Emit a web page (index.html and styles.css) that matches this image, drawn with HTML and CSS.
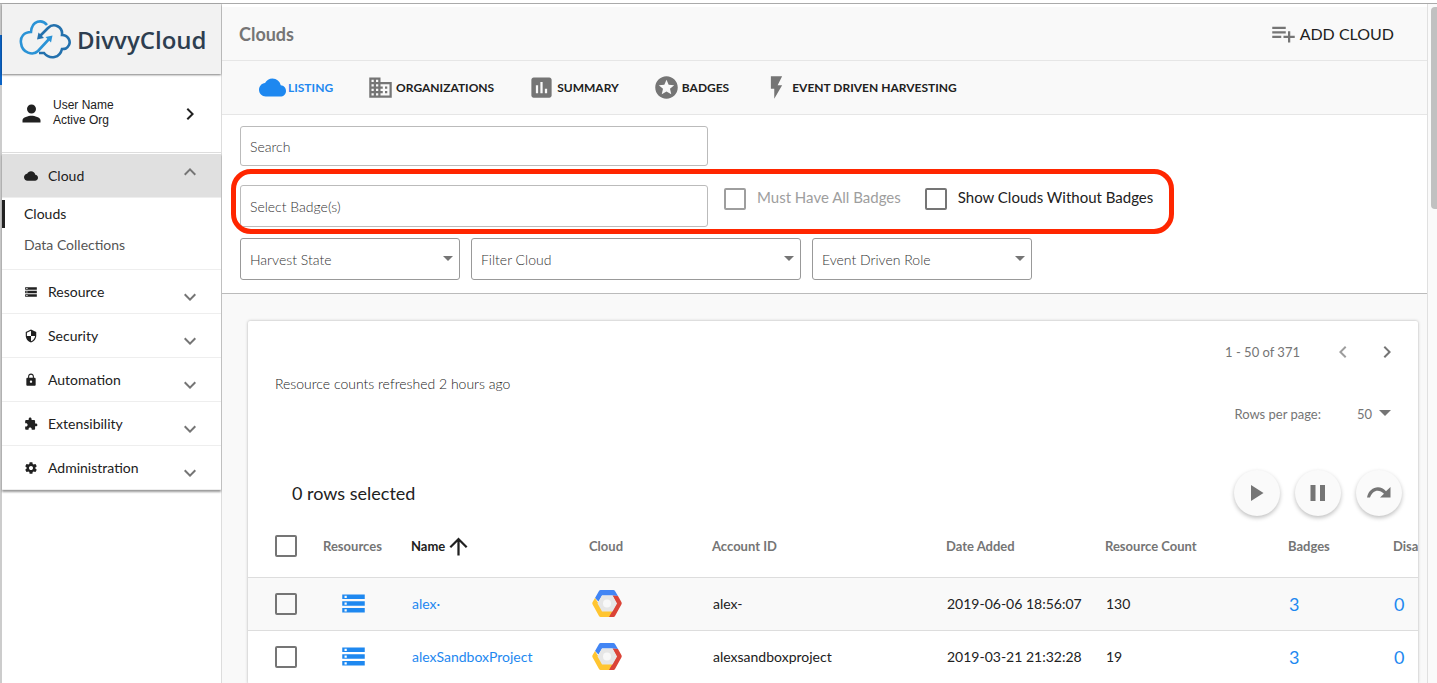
FILE: index.html
```
<!DOCTYPE html>
<html lang="en">
<head>
  <meta charset="utf-8">
  <title>Clouds</title>
  <link rel="stylesheet" href="styles.css">
</head>
<body>
  <!-- shared icons -->
  <svg class="sprite" aria-hidden="true">
    <symbol id="cloud" viewBox="0 0 24 24"><path d="M19.35 10.04C18.67 6.59 15.64 4 12 4 9.11 4 6.6 5.64 5.35 8.04 2.34 8.36 0 10.91 0 14c0 3.31 2.69 6 6 6h13c2.76 0 5-2.24 5-5 0-2.64-2.05-4.78-4.65-4.96z"/></symbol>
    <symbol id="storage" viewBox="0 0 24 24"><path d="M2 20h20v-4H2v4zm2-3h2v2H4v-2zM2 4v4h20V4H2zm4 3H4V5h2v2zm-4 7h20v-4H2v4zm2-3h2v2H4v-2z"/></symbol>
    <symbol id="down" viewBox="0 0 24 24"><path d="M16.59 8.59L12 13.17 7.41 8.59 6 10l6 6 6-6z"/></symbol>
    <symbol id="up" viewBox="0 0 24 24"><path d="M12 8l-6 6 1.41 1.41L12 10.83l4.59 4.58L18 14z"/></symbol>
    <symbol id="right" viewBox="0 0 24 24"><path d="M10 6L8.59 7.41 13.17 12l-4.58 4.59L10 18l6-6z"/></symbol>
    <symbol id="left" viewBox="0 0 24 24"><path d="M15.41 7.41L14 6l-6 6 6 6 1.41-1.41L10.83 12z"/></symbol>
    <symbol id="gcp" viewBox="0 0 30 27">
      <path fill="#4285f4" d="M7 1Q7.500 0 8.700 0H21.300Q22.500 0 23 1L26 6 20.500 5.500H10L6.500 11.500 3 8z"/>
      <path fill="#db4437" d="M26 6l3.500 6.300q.5 1 0 2L23 26q-.5 1-1.500 1H16l4.500-6.500 4-7L20.500 5.500z"/>
      <path fill="#ffc531" d="M3 8l3.500 5.500 4 7.500h9.800L17 27H8.700Q7.500 27 7 26L.5 14.300q-.5-1 0-2z"/>
      <path fill="#e6e6e6" d="M10 5.500h10.500l4.500 8-4.500 8H10l-4.500-8z"/>
      <circle cx="15" cy="13.500" r="4" fill="#f8f8f8"/>
    </symbol>
  </svg>

  <div class="app">
    <div class="edge"></div>
    <aside class="sidebar">
      <a class="logo" href="#">
        <svg width="52" height="40" viewBox="19 19 52 40">
          <g fill="none" stroke-width="2.600">
            <path stroke="#2b93d6" d="M47 25C42 19 32 20 31 32C24 32 20 37 21 43C22 53 33 56 38 51L50 38"/>
            <path stroke="#2471ad" d="M40 36L48 28C54 22 63 27 62 35C68 35 71 41 69 45C67 49 65 49 62 49C60 58 50 60 44 53H39"/>
          </g>
          <path fill="#2471ad" d="M37 39.500l1.500-7 5.500 5.500z"/>
          <path fill="#2b93d6" d="M52.500 35.500l-7 1.500 5.500 5.500z"/>
        </svg>
        <span>DivvyCloud</span>
      </a>
      <a class="user" href="#">
        <svg class="icon-lg" viewBox="0 0 24 24"><path d="M12 12c2.210 0 4-1.790 4-4s-1.790-4-4-4-4 1.790-4 4 1.790 4 4 4zm0 2c-2.670 0-8 1.340-8 4v2h16v-2c0-2.660-5.330-4-8-4z"/></svg>
        <span class="user-text">User Name<br>Active Org</span>
        <svg class="icon"><use href="#right"/></svg>
      </a>
      <nav>
        <a class="nav-item open" href="#">
          <svg class="icon-sm"><use href="#cloud"/></svg>
          <span>Cloud</span>
          <svg class="icon arrow"><use href="#up"/></svg>
        </a>
        <div class="sub-nav">
          <a class="active" href="#">Clouds</a>
          <a href="#">Data Collections</a>
        </div>
        <a class="nav-item" href="#">
          <svg class="icon-sm"><use href="#storage"/></svg>
          <span>Resource</span>
          <svg class="icon arrow"><use href="#down"/></svg>
        </a>
        <a class="nav-item" href="#">
          <svg class="icon-sm" viewBox="0 0 24 24"><path d="M12 1L3 5v6c0 5.550 3.840 10.740 9 12 5.160-1.260 9-6.450 9-12V5l-9-4zm0 10.990h7c-.53 4.120-3.280 7.790-7 8.940V12H5V6.300l7-3.110v8.800z"/></svg>
          <span>Security</span>
          <svg class="icon arrow"><use href="#down"/></svg>
        </a>
        <a class="nav-item" href="#">
          <svg class="icon-sm" viewBox="0 0 24 24"><path d="M18 8h-1V6c0-2.760-2.240-5-5-5S7 3.240 7 6v2H6c-1.100 0-2 .9-2 2v10c0 1.100.9 2 2 2h12c1.100 0 2-.9 2-2V10c0-1.100-.9-2-2-2zm-6 9c-1.100 0-2-.9-2-2s.9-2 2-2 2 .9 2 2-.9 2-2 2zm3.100-9H8.900V6c0-1.710 1.390-3.100 3.100-3.100 1.710 0 3.100 1.390 3.100 3.100v2z"/></svg>
          <span>Automation</span>
          <svg class="icon arrow"><use href="#down"/></svg>
        </a>
        <a class="nav-item" href="#">
          <svg class="icon-sm" viewBox="0 0 24 24"><path d="M20.500 11H19V7c0-1.100-.9-2-2-2h-4V3.500C13 2.120 11.880 1 10.500 1S8 2.120 8 3.500V5H4c-1.100 0-1.990.9-1.990 2v3.800H3.500c1.490 0 2.700 1.210 2.700 2.700s-1.210 2.700-2.700 2.700H2V20c0 1.100.9 2 2 2h3.800v-1.500c0-1.490 1.210-2.700 2.700-2.700 1.490 0 2.700 1.210 2.700 2.700V22H17c1.100 0 2-.9 2-2v-4h1.500c1.380 0 2.500-1.120 2.500-2.500S21.880 11 20.500 11z"/></svg>
          <span>Extensibility</span>
          <svg class="icon arrow"><use href="#down"/></svg>
        </a>
        <a class="nav-item" href="#">
          <svg class="icon-sm" viewBox="0 0 24 24"><path d="M19.430 12.980c.04-.32.07-.64.07-.98s-.03-.66-.07-.98l2.110-1.650c.19-.15.24-.42.12-.64l-2-3.460c-.12-.22-.39-.3-.61-.22l-2.490 1c-.52-.4-1.080-.73-1.690-.98l-.38-2.650C14.460 2.180 14.250 2 14 2h-4c-.25 0-.46.18-.49.42l-.38 2.650c-.61.25-1.170.59-1.690.98l-2.490-1c-.23-.09-.49 0-.61.22l-2 3.460c-.13.22-.07.49.12.64l2.110 1.650c-.04.32-.07.65-.07.98s.03.66.07.98l-2.110 1.650c-.19.15-.24.42-.12.64l2 3.460c.12.22.39.3.61.22l2.490-1c.52.4 1.080.73 1.690.98l.38 2.650c.03.24.24.42.49.42h4c.25 0 .46-.18.49-.42l.38-2.650c.61-.25 1.170-.59 1.690-.98l2.490 1c.23.09.49 0 .61-.22l2-3.460c.12-.22.07-.49-.12-.64l-2.110-1.650zM12 15.500c-1.930 0-3.500-1.570-3.500-3.500s1.570-3.500 3.500-3.500 3.500 1.570 3.500 3.500-1.570 3.500-3.500 3.500z"/></svg>
          <span>Administration</span>
          <svg class="icon arrow"><use href="#down"/></svg>
        </a>
      </nav>
    </aside>

    <main>
      <header class="title-bar">
        <h1>Clouds</h1>
        <button class="add-cloud" type="button">
          <svg class="icon-lg" viewBox="0 0 24 24"><path d="M14 10H2v2h12v-2zm0-4H2v2h12V6zm4 8v-4h-2v4h-4v2h4v4h2v-4h4v-2h-4zM2 16h8v-2H2v2z"/></svg>
          ADD CLOUD
        </button>
      </header>

      <nav class="tabs">
        <a class="active" href="#"><svg class="icon-lg"><use href="#cloud"/></svg>LISTING</a>
        <a href="#"><svg class="icon-lg" viewBox="0 0 24 24"><path d="M12 7V3H2v18h20V7H12zM6 19H4v-2h2v2zm0-4H4v-2h2v2zm0-4H4V9h2v2zm0-4H4V5h2v2zm4 12H8v-2h2v2zm0-4H8v-2h2v2zm0-4H8V9h2v2zm0-4H8V5h2v2zm10 12h-8v-2h2v-2h-2v-2h2v-2h-2V9h8v10zm-2-8h-2v2h2v-2zm0 4h-2v2h2v-2z"/></svg>ORGANIZATIONS</a>
        <a href="#"><svg class="icon-lg" viewBox="0 0 24 24"><path d="M19 3H5c-1.100 0-2 .9-2 2v14c0 1.100.9 2 2 2h14c1.100 0 2-.9 2-2V5c0-1.100-.9-2-2-2zM9 17H7v-7h2v7zm4 0h-2V7h2v10zm4 0h-2v-4h2v4z"/></svg>SUMMARY</a>
        <a href="#"><svg class="icon-lg" viewBox="0 0 24 24"><path d="M11.990 2C6.470 2 2 6.480 2 12s4.470 10 9.990 10C17.520 22 22 17.520 22 12S17.520 2 11.990 2zm4.240 16L12 15.450 7.770 18l1.120-4.810-3.730-3.230 4.920-.42L12 5l1.920 4.530 4.920.42-3.730 3.230L16.230 18z"/></svg>BADGES</a>
        <a href="#"><svg class="icon-lg" viewBox="0 0 24 24"><path d="M7 2v11h3v9l7-12h-4l4-8z"/></svg>EVENT DRIVEN HARVESTING</a>
      </nav>

      <form class="filters">
        <input class="text-box search" type="text" placeholder="Search" aria-label="Search">
        <div class="badge-row">
          <input class="text-box" type="text" placeholder="Select Badge(s)" aria-label="Select Badge(s)">
          <label class="check disabled"><input type="checkbox" disabled>Must Have All Badges</label>
          <label class="check"><input type="checkbox">Show Clouds Without Badges</label>
        </div>
        <div class="select-row">
          <div class="select">
            <select aria-label="Harvest State"><option>Harvest State</option></select>
          </div>
          <div class="select wide">
            <select aria-label="Filter Cloud"><option>Filter Cloud</option></select>
          </div>
          <div class="select">
            <select aria-label="Event Driven Role"><option>Event Driven Role</option></select>
          </div>
        </div>
      </form>

      <section class="card">
        <div class="card-head">
          <p>Resource counts refreshed 2 hours ago</p>
          <div class="paging">
            <div class="pager">
              <span>1 - 50 of 371</span>
              <button type="button" aria-label="Previous page" disabled><svg class="icon"><use href="#left"/></svg></button>
              <button type="button" aria-label="Next page"><svg class="icon"><use href="#right"/></svg></button>
            </div>
            <div class="per-page">
              <label for="rows">Rows per page:</label>
              <div class="select plain">
                <select id="rows"><option>50</option></select>
              </div>
            </div>
          </div>
        </div>
        <div class="toolbar">
          <span>0 rows selected</span>
          <button type="button" aria-label="Start"><svg viewBox="0 0 24 24"><path d="M6 4v16l12.500-8z"/></svg></button>
          <button type="button" aria-label="Pause"><svg viewBox="0 0 24 24"><path d="M4.500 4h5v16h-5zM14 4h5v16h-5z"/></svg></button>
          <button type="button" aria-label="Retry"><svg viewBox="0 0 24 24"><path d="M23.500 6v10.500H13l4-3.700C12 7.500 5.500 9 3 16.500H0C2 6 13 3 19 10.200z"/></svg></button>
        </div>
        <table>
          <colgroup>
            <col class="c-check"><col class="c-resources"><col class="c-name"><col class="c-cloud"><col class="c-account"><col class="c-date"><col class="c-count"><col class="c-badges"><col>
          </colgroup>
          <thead>
            <tr>
              <th><input type="checkbox" aria-label="Select all"></th>
              <th>Resources</th>
              <th class="sorted"><span>Name<svg class="icon-lg" viewBox="0 0 24 24"><path d="M4 12l1.410 1.410L11 7.830V20h2V7.830l5.580 5.590L20 12l-8-8-8 8z"/></svg></span></th>
              <th>Cloud</th>
              <th>Account ID</th>
              <th>Date Added</th>
              <th>Resource Count</th>
              <th>Badges</th>
              <th>Disa</th>
            </tr>
          </thead>
          <tbody>
            <tr>
              <td><input type="checkbox" aria-label="Select alex-"></td>
              <td class="center"><a href="#" aria-label="Resources"><svg class="icon-lg"><use href="#storage"/></svg></a></td>
              <td><a href="#">alex·</a></td>
              <td><svg class="gcp"><use href="#gcp"/></svg></td>
              <td>alex-</td>
              <td>2019-06-06 18:56:07</td>
              <td>130</td>
              <td class="num"><a href="#">3</a></td>
              <td class="num"><a href="#">0</a></td>
            </tr>
            <tr>
              <td><input type="checkbox" aria-label="Select alexSandboxProject"></td>
              <td class="center"><a href="#" aria-label="Resources"><svg class="icon-lg"><use href="#storage"/></svg></a></td>
              <td><a href="#">alexSandboxProject</a></td>
              <td><svg class="gcp"><use href="#gcp"/></svg></td>
              <td>alexsandboxproject</td>
              <td>2019-03-21 21:32:28</td>
              <td>19</td>
              <td class="num"><a href="#">3</a></td>
              <td class="num"><a href="#">0</a></td>
            </tr>
          </tbody>
        </table>
      </section>
    </main>
    <div class="scrollbar"><div class="thumb"></div></div>
  </div>
</body>
</html>
```
FILE: styles.css
```
*,
*::before {
  box-sizing: border-box;
}

body {
  margin: 0;
  padding-top: 3px;
  height: 100vh;
  overflow: hidden;
  background-color: #fff;
  color: #212121;
  font-family: Lato, sans-serif;
  font-size: 14px;
}

a {
  color: inherit;
  text-decoration: none;
}

button {
  border: none;
  padding: 0;
  background: none;
  color: inherit;
  font-family: inherit;
  cursor: pointer;
}

svg {
  display: block;
  flex-shrink: 0;
  fill: currentColor;
}

.sprite {
  display: none;
}

.icon-sm {
  width: 14px;
  height: 14px;
}

.icon {
  width: 24px;
  height: 24px;
}

.icon-lg {
  width: 27px;
  height: 27px;
}

input[type="checkbox"] {
  appearance: none;
  display: block;
  flex-shrink: 0;
  width: 22px;
  height: 22px;
  margin: 0;
  border: 2px solid #757575;
  border-radius: 2px;
}

.app {
  display: flex;
  height: 100%;
  border-top: 1px solid #aaa;
}

.edge {
  width: 2px;
  background: linear-gradient(#ccc 31px, #0b63c5 31px, #0b63c5 81px, #ccc 81px);
}

/* sidebar */

.sidebar {
  width: 220px;
  flex-shrink: 0;
  border-right: 1px solid #ddd;
}

.logo {
  display: flex;
  align-items: center;
  gap: 6px;
  height: 70px;
  padding-left: 17px;
  background-color: #f2f2f2;
  box-shadow: 0 1px 2px rgba(0, 0, 0, 0.5);
  color: #2d3e50;
  font-family: "Open Sans", sans-serif;
  font-size: 24px;
  font-weight: 600;
}

.user {
  display: flex;
  align-items: center;
  gap: 8px;
  height: 79px;
  padding: 1px 19px 0 16px;
  border-bottom: 1px solid #ddd;
  font-family: "Liberation Sans", sans-serif;
  font-size: 12px;
  line-height: 15px;
}

.user-text {
  flex: 1;
  padding-bottom: 2px;
}

.sidebar nav {
  padding-top: 1px;
  box-shadow: 0 2px 2px rgba(0, 0, 0, 0.4);
}

.nav-item {
  display: flex;
  align-items: center;
  gap: 10px;
  height: 44px;
  padding: 0 19px 0 22px;
  border-bottom: 1px solid #eee;
}

.nav-item span {
  flex: 1;
}

.nav-item .arrow {
  align-self: flex-end;
  margin-bottom: 4px;
  color: #757575;
}

.nav-item.open {
  background-color: #e0e0e0;
}

.nav-item.open .arrow {
  margin-bottom: 13px;
}

.sub-nav {
  padding: 2px 0 7px;
  border-bottom: 1px solid #eee;
}

.sub-nav a {
  display: block;
  margin-bottom: 3px;
  padding-left: 19px;
  border-left: 3px solid transparent;
  color: #555;
  line-height: 28px;
}

.sub-nav .active {
  border-color: #212121;
  color: #212121;
}

/* page header */

main {
  flex: 1;
  min-width: 0;
  overflow: hidden;
  border-right: 1px solid #e0e0e0;
  background-color: #f9f9f9;
}

.title-bar {
  display: flex;
  justify-content: space-between;
  align-items: center;
  height: 57px;
  padding: 0 33px 0 17px;
  border-top: 3px solid #fff;
  border-bottom: 1px solid #e6e6e6;
}

.title-bar h1 {
  margin: 0;
  color: #757575;
  font-size: 18px;
}

.add-cloud {
  display: flex;
  align-items: center;
  gap: 3px;
  font-size: 16px;
}

.add-cloud svg,
.tabs svg {
  color: #757575;
}

.tabs {
  display: flex;
  align-items: center;
  gap: 34px;
  height: 54px;
  padding-left: 37px;
  border-bottom: 1px solid #e6e6e6;
  font-size: 12px;
  font-weight: 700;
}

.tabs a {
  display: flex;
  align-items: center;
  gap: 2px;
}

.tabs .active,
.tabs .active svg {
  color: #1e88f0;
}

/* filters */

.filters {
  padding: 11px 18px 13px;
  border-bottom: 1px solid #bbb;
  background-color: #fff;
}

.text-box {
  display: block;
  width: 468px;
  height: 42px;
  padding: 0 9px;
  border: 1px solid #bbb;
  border-radius: 3px;
  font-family: inherit;
  font-size: 14px;
  font-weight: 300;
}

.text-box::placeholder {
  color: #333;
}

.search {
  height: 40px;
}

.badge-row {
  position: relative;
  display: flex;
  gap: 16px;
  margin: 19px 0 11px;
}

/* highlight ring around the badge filters */
.badge-row::before {
  content: "";
  position: absolute;
  top: -16px;
  left: -9px;
  width: 943px;
  height: 65px;
  border: 5px solid #ff2600;
  border-radius: 20px;
  pointer-events: none;
}

.check {
  display: flex;
  gap: 11px;
  padding-top: 3px;
  margin-right: 8px;
  font-size: 15px;
  line-height: 18px;
}

.check.disabled {
  color: #9e9e9e;
}

.check.disabled input {
  border-color: #9e9e9e;
}

.select-row {
  display: flex;
  gap: 11px;
}

.select {
  position: relative;
  width: 220px;
}

.select.wide {
  width: 330px;
}

.select select {
  appearance: none;
  display: block;
  width: 100%;
  height: 42px;
  padding: 0 9px;
  border: 1px solid #999;
  border-radius: 3px;
  background-color: #fff;
  color: #333;
  font-family: inherit;
  font-size: 14px;
  font-weight: 300;
}

.select::after {
  content: "";
  position: absolute;
  top: 18px;
  right: 7px;
  border: 5px solid transparent;
  border-top-color: #757575;
  border-bottom: none;
  pointer-events: none;
}

/* cloud listing */

.card {
  margin: 27px 9px 0 26px;
  overflow: hidden;
  border-radius: 2px;
  background-color: #fff;
  box-shadow: 0 0 3px rgba(0, 0, 0, 0.3);
}

.card-head {
  display: flex;
  justify-content: space-between;
  align-items: center;
  padding: 0 19px 0 27px;
}

.card-head p {
  margin: 0;
  color: #212121;
  font-weight: 300;
}

.paging {
  color: #757575;
  font-size: 13px;
}

.pager,
.per-page {
  display: flex;
  justify-content: flex-end;
  align-items: center;
  height: 62px;
}

.pager button {
  margin-left: 20px;
}

.pager span {
  margin-right: 11px;
}

.pager button:disabled {
  opacity: 0.7;
}

.per-page {
  gap: 36px;
  padding-right: 8px;
}

.select.plain {
  width: 34px;
}

.select.plain select {
  height: 20px;
  padding: 0;
  border: none;
  color: #757575;
  font-size: 13px;
  font-weight: 400;
}

.select.plain::after {
  top: 6px;
  right: 0;
  border-width: 6px;
  border-bottom: none;
}

.toolbar {
  display: flex;
  align-items: center;
  gap: 15px;
  padding: 25px 16px 0 44px;
  font-size: 18px;
}

.toolbar span {
  flex: 1;
}

.toolbar button {
  display: flex;
  justify-content: center;
  align-items: center;
  width: 46px;
  height: 46px;
  border-radius: 50%;
  background-color: #fafafa;
  box-shadow: 0 2px 4px rgba(0, 0, 0, 0.25);
  color: #757575;
}

.toolbar svg {
  width: 24px;
  height: 24px;
}

table {
  width: 100%;
  table-layout: fixed;
  border-collapse: collapse;
}

.c-check {
  width: 75px;
}

.c-resources {
  width: 88px;
}

.c-name {
  width: 178px;
}

.c-cloud {
  width: 123px;
}

.c-account {
  width: 234px;
}

.c-date {
  width: 159px;
}

.c-count {
  width: 183px;
}

.c-badges {
  width: 105px;
}

th,
td {
  padding: 0;
  border-bottom: 1px solid #ddd;
  text-align: left;
  white-space: nowrap;
}

th {
  height: 61px;
  color: #757575;
  font-size: 13px;
}

td {
  height: 53px;
  padding-left: 1px;
}

th:first-child,
td:first-child {
  padding-left: 27px;
}

.sorted {
  color: #212121;
}

.sorted span {
  display: flex;
  align-items: center;
}

tbody tr:nth-child(odd) {
  background-color: #f9f9f9;
}

td a {
  color: #1e88f0;
}

.center svg {
  margin-left: 16px;
}

.num {
  font-size: 18px;
}

.gcp {
  width: 30px;
  height: 27px;
  margin-left: 2px;
}

/* window scrollbar */

.scrollbar {
  width: 9px;
  padding: 3px 0 0 3px;
  background-color: #fafafa;
}

.thumb {
  height: 202px;
  border-radius: 4px 0 0 4px;
  background-color: #c1c1c1;
}
```
